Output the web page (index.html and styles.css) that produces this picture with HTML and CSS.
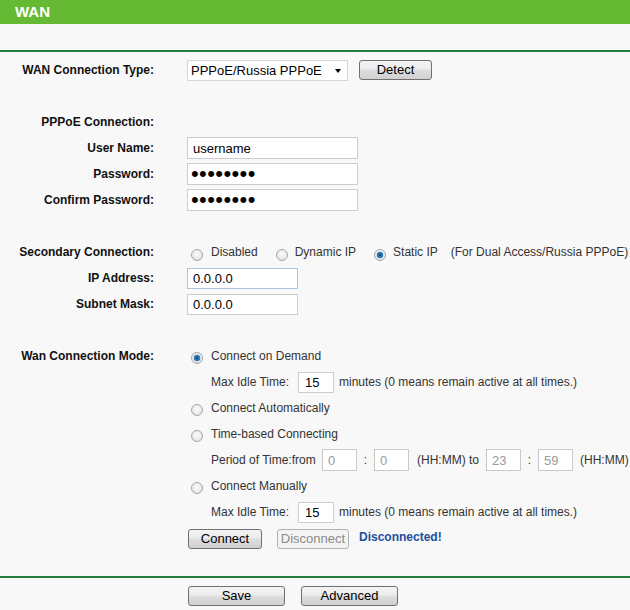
FILE: index.html
```html
<!DOCTYPE html>
<html>
<head>
<meta charset="utf-8">
<link rel="stylesheet" href="styles.css">
</head>
<body>
<div class="header">WAN</div>
<div class="rule"></div>
<div class="form">
  <div class="label">WAN Connection Type:</div>
  <div class="field">
    <div class="select"><span>PPPoE/Russia PPPoE</span><span class="arrow"></span></div>
    <button class="btn btn-detect">Detect</button>
  </div>
  <div class="spacer"></div>

  <div class="label">PPPoE Connection:</div>
  <div class="field"></div>
  <div class="label">User Name:</div>
  <div class="field"><div class="input input-wide">username</div></div>
  <div class="label">Password:</div>
  <div class="field"><div class="input input-wide pw">••••••••</div></div>
  <div class="label">Confirm Password:</div>
  <div class="field"><div class="input input-wide pw">••••••••</div></div>
  <div class="spacer"></div>

  <div class="label">Secondary Connection:</div>
  <div class="field sec">
    <span class="radio"></span><span class="opt first">Disabled</span>
    <span class="radio"></span><span class="opt">Dynamic IP</span>
    <span class="radio checked"></span><span class="opt">Static IP</span>
    <span class="note">(For Dual Access/Russia PPPoE)</span>
  </div>
  <div class="label">IP Address:</div>
  <div class="field"><div class="input input-ip focus">0.0.0.0</div></div>
  <div class="label">Subnet Mask:</div>
  <div class="field"><div class="input input-ip">0.0.0.0</div></div>
  <div class="spacer"></div>

  <div class="label">Wan Connection Mode:</div>
  <div class="field mode"><span class="radio checked"></span><span class="opt">Connect on Demand</span></div>
  <div></div>
  <div class="field sub"><span class="sublabel idle">Max Idle Time:</span><div class="input input-small">15</div><span class="after">minutes (0 means remain active at all times.)</span></div>
  <div></div>
  <div class="field mode"><span class="radio"></span><span class="opt">Connect Automatically</span></div>
  <div></div>
  <div class="field mode"><span class="radio"></span><span class="opt">Time-based Connecting</span></div>
  <div></div>
  <div class="field sub">
    <span class="sublabel period">Period of Time:from</span>
    <div class="input input-time disabled">0</div>
    <span class="colon">:</span>
    <div class="input input-time disabled">0</div>
    <span class="hh">(HH:MM) to</span>
    <div class="input input-time disabled">23</div>
    <span class="colon">:</span>
    <div class="input input-time disabled">59</div>
    <span class="hh2">(HH:MM)</span>
  </div>
  <div></div>
  <div class="field mode"><span class="radio"></span><span class="opt">Connect Manually</span></div>
  <div></div>
  <div class="field sub"><span class="sublabel idle">Max Idle Time:</span><div class="input input-small">15</div><span class="after">minutes (0 means remain active at all times.)</span></div>
  <div></div>
  <div class="field">
    <button class="btn btn-connect">Connect</button>
    <button class="btn btn-disconnect" disabled>Disconnect</button>
    <span class="status">Disconnected!</span>
  </div>
</div>
<div class="rule rule-bottom"></div>
<div class="actions">
  <button class="btn btn-big">Save</button>
  <button class="btn btn-big">Advanced</button>
</div>
</body>
</html>
```
FILE: styles.css
```css
* { box-sizing: border-box; }
html, body { margin: 0; padding: 0; }
body {
  width: 630px;
  height: 610px;
  overflow: hidden;
  background: #f8f8f8;
  font-family: "Liberation Sans", Arial, sans-serif;
  font-size: 12px;
  color: #333;
}
.header {
  height: 24px;
  background: #66b933;
  color: #fff;
  font-weight: bold;
  font-size: 15px;
  line-height: 24px;
  padding-left: 15px;
}
.rule {
  height: 2px;
  background: #1f7f3b;
  margin-top: 26px;
}
.form {
  display: grid;
  grid-template-columns: 154px 1fr;
  column-gap: 33px;
  grid-auto-rows: 26px;
  align-items: center;
  padding-top: 5px;
}
.spacer { grid-column: 1 / -1; }
.label {
  text-align: right;
  font-weight: bold;
  color: #111;
  white-space: nowrap;
}
.field {
  display: flex;
  align-items: center;
  white-space: nowrap;
  height: 26px;
}
.select {
  width: 161px;
  height: 21px;
  background: #fff;
  border: 1px solid #d6d6d6;
  display: flex;
  align-items: center;
  justify-content: space-between;
  padding: 0 6px 0 3px;
  font-size: 13px;
  color: #000;
}
.arrow {
  width: 0;
  height: 0;
  border-left: 3.5px solid transparent;
  border-right: 3.5px solid transparent;
  border-top: 4px solid #000;
  margin-top: 2px;
}
.btn {
  height: 20px;
  border: 1px solid #707070;
  border-radius: 3px;
  background: linear-gradient(#f3f3f3 0%, #ececec 45%, #dedede 50%, #d0d0d0 100%);
  font-family: "Liberation Sans", Arial, sans-serif;
  font-size: 13px;
  color: #000;
  padding: 0;
  line-height: 18px;
}
.btn-detect { width: 73px; margin-left: 11px; }
.input {
  height: 22px;
  background: #fff;
  border: 1px solid #cdcdcd;
  font-size: 13px;
  color: #000;
  display: flex;
  align-items: center;
  padding-left: 5px;
}
.input-wide { width: 171px; }
.input-ip { width: 111px; height: 21px; }
.focus { border-color: #a9c6e3; }
.pw {
  font-size: 22px;
  letter-spacing: 0.4px;
  padding-left: 3px;
  padding-bottom: 1px;
  line-height: 1;
}
.radio {
  width: 12px;
  height: 12px;
  border-radius: 50%;
  border: 1px solid #a7a7a7;
  background: radial-gradient(circle at 50% 40%, #fbfbfb 0, #e9e9e9 60%, #d6d6d6 100%);
  margin-left: 4px;
  margin-top: 4px;
  flex: none;
}
.radio.checked {
  background:
    radial-gradient(circle at 50% 50%, #0f3b66 0, #1f5f99 1.2px, #3c8bd0 2.4px, #2a6aa6 3.2px, rgba(42,106,166,0) 3.6px),
    radial-gradient(circle at 50% 40%, #fbfbfb 0, #e9e9e9 60%, #d6d6d6 100%);
}
.sec .radio { margin-top: 6px; }
.sec .radio + .opt { margin-left: 7px; }
.sec .radio + .opt.first { margin-left: 8px; }
.sec .opt + .radio { margin-left: 18px; }
.sec .note { margin-left: 13px; }
.mode .opt { margin-left: 8px; }
.sub { padding-left: 24px; }
.sublabel { display: inline-block; }
.idle { width: 87px; }
.period { width: 111px; }
.input-small { width: 36px; height: 21px; padding-left: 6px; font-size: 13px; }
.input-time { width: 35px; height: 22px; padding-left: 5px; }
.disabled { color: #9a9a9a; border-color: #c8c8c8; }
.after { margin-left: 5px; }
.colon { width: 17px; text-align: center; }
.hh { margin-left: 8px; width: 69px; }
.hh2 { margin-left: 7px; }
.btn-connect { width: 74px; margin-left: 1px; margin-top: 2px; }
.btn-disconnect {
  width: 72px;
  margin-left: 15px;
  margin-top: 2px;
  border-color: #adb2b5;
  background: #f4f4f4;
  color: #8a8a8a;
}
.status {
  margin-left: 10px;
  font-weight: bold;
  color: #1d4e9e;
  margin-bottom: 2px;
}
.rule-bottom { margin-top: 25px; height: 2px; }
.actions {
  display: flex;
  padding-left: 188px;
  padding-top: 8px;
  gap: 16px;
}
.btn-big { width: 97px; height: 20px; }
```
